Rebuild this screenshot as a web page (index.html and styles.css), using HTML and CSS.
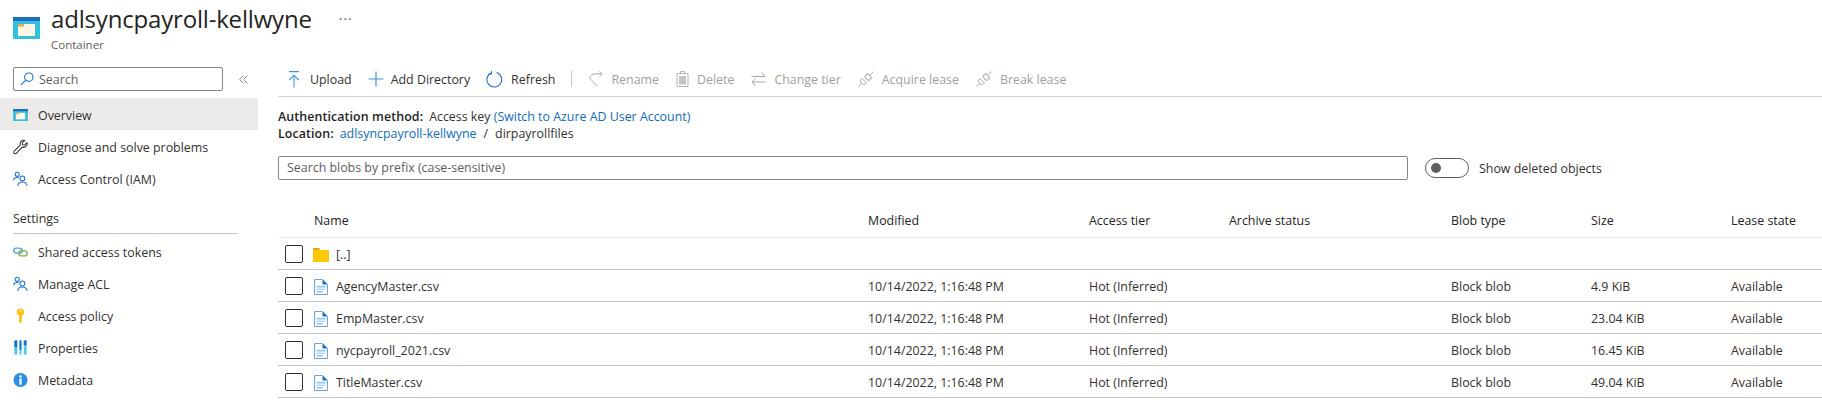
FILE: index.html
```html
<!DOCTYPE html>
<html>
<head>
<meta charset="utf-8">
<title>adlsyncpayroll-kellwyne</title>
<link rel="stylesheet" href="styles.css">
</head>
<body>
<svg class="defs" width="0" height="0">
  <defs>
    <symbol id="container" viewBox="0 0 27 22">
      <rect width="27" height="22" rx="1" fill="#32bedd"/>
      <rect width="27" height="4" fill="#1c6fc0"/>
      <rect x="5" y="7" width="17" height="12" fill="#fff6e6"/>
      <rect x="5" y="7" width="6" height="2.5" fill="#f2a64a"/>
    </symbol>
    <symbol id="people" viewBox="0 0 16 16">
      <g fill="none" stroke="#1a73d1" stroke-width="1.1">
        <circle cx="4.5" cy="3" r="2.2"/>
        <path d="M.6 9.5c.3-2 1.8-3 3.9-3 .7 0 1.3.1 1.8.3"/>
        <circle cx="10" cy="7.5" r="2.6"/>
        <path d="M5 15.5c.2-2.7 2.200-4.400 5-4.400s4.800 1.700 5 4.400"/>
      </g>
    </symbol>
    <symbol id="doc" viewBox="0 0 14 16">
      <path d="M.5.5h8l5 5v10H.5z" fill="#fff" stroke="#5ea9e6"/>
      <path d="M8.500.5l5 5h-5z" fill="#1a73c8"/>
      <rect x="2.500" y="7" width="9" height="1.500" fill="#8fc1ec"/>
      <rect x="2.500" y="9.500" width="9" height="1.500" fill="#b5d6f2"/>
      <rect x="2.500" y="12" width="6" height="1.500" fill="#8fc1ec"/>
    </symbol>
    <symbol id="plug" viewBox="0 0 16 16">
      <g fill="none" stroke="#a8a8a8" stroke-width="1">
        <path d="M.5 15.500l3.200-3.200"/>
        <path d="M12.500 3.500l3-3"/>
        <path d="M3 8.500c-.8 1.200-.6 2.800.5 3.900s2.700 1.300 3.900.5l1-1-4.400-4.400z"/>
        <rect x="7.200" y="3.800" width="6" height="4.600" rx="1.500" transform="rotate(45 10.200 6.100)"/>
      </g>
    </symbol>
  </defs>
</svg>

<div class="page-head">
  <svg class="head-icon"><use href="#container"/></svg>
  <div class="head-text">
    <h1>adlsyncpayroll-kellwyne</h1>
    <div class="sub">Container</div>
  </div>
  <div class="more">···</div>
</div>

<div class="layout">
  <div class="sidebar">
    <div class="side-search-row">
      <div class="side-search">
        <svg width="14" height="14" viewBox="0 0 14 14" fill="none" stroke="#1a73d1" stroke-width="1.1"><circle cx="8.800" cy="5.200" r="4.200"/><path d="M5.800 8.200L.8 13.200"/></svg>
        <span>Search</span>
      </div>
      <svg class="collapse" width="9" height="9" viewBox="0 0 9 9" fill="none" stroke="#8a8886"><path d="M4.300.5L.7 4.500l3.600 4M8.300.5L4.700 4.500l3.600 4"/></svg>
    </div>

    <div class="nav-item active">
      <svg class="nav-icon" viewBox="0 0 15 12"><use href="#container"/></svg>
      Overview
    </div>
    <div class="nav-item">
      <svg class="nav-icon" viewBox="0 0 16 16" fill="none" stroke="#323130" stroke-width="1.1"><path d="M1.200 12.500L7.800 6c-.6-2.200.1-4 2-5 1-.4 2-.4 2.800 0L9.900 3.600l.3 2 2 .3 2.700-2.600c.4 1 .3 2-.2 2.900-1 1.800-2.800 2.500-4.800 2L3.500 14.800c-.7.6-1.500.6-2.100 0-.6-.6-.8-1.600-.2-2.300z"/></svg>
      Diagnose and solve problems
    </div>
    <div class="nav-item">
      <svg class="nav-icon"><use href="#people"/></svg>
      Access Control (IAM)
    </div>

    <div class="nav-title">Settings</div>

    <div class="nav-item">
      <svg class="nav-icon" viewBox="0 0 16 16" fill="none" stroke-width="1.400"><rect x=".8" y="3.800" width="9" height="5.400" rx="2.700" stroke="#4a9fe0"/><rect x="6.200" y="6.800" width="9" height="5.400" rx="2.700" stroke="#7ab648"/></svg>
      Shared access tokens
    </div>
    <div class="nav-item">
      <svg class="nav-icon"><use href="#people"/></svg>
      Manage ACL
    </div>
    <div class="nav-item">
      <svg class="nav-icon" viewBox="0 0 16 16"><path d="M8 0c2.400 0 4.200 1.700 4.200 3.800 0 1.700-1.100 3-2.700 3.500V14L8 16l-1.500-1.800V7.300C4.900 6.800 3.800 5.500 3.800 3.800 3.800 1.700 5.600 0 8 0z" fill="#fcc419"/><circle cx="8" cy="2.600" r="1" fill="#fff3c4"/></svg>
      Access policy
    </div>
    <div class="nav-item">
      <svg class="nav-icon" viewBox="0 0 16 16"><rect x="1.500" width="3" height="15" fill="#50c8ea"/><rect x="1.500" width="3" height="7" fill="#1a73c8"/><rect x="7" width="2" height="15" fill="#50c8ea"/><rect x="7" width="2" height="10" fill="#1a73c8"/><rect x="11.500" width="3" height="15" fill="#50c8ea"/><rect x="11.500" width="3" height="5" fill="#1a73c8"/></svg>
      Properties
    </div>
    <div class="nav-item">
      <svg class="nav-icon" viewBox="0 0 16 16"><circle cx="8" cy="8" r="7.500" fill="#2a8fe0"/><circle cx="8" cy="4.300" r="1.300" fill="#fff"/><rect x="6.800" y="6.500" width="2.400" height="6.500" fill="#fff"/></svg>
      Metadata
    </div>
  </div>

  <div class="main">
    <div class="toolbar">
      <div class="tool upload">
        <svg width="12" height="17" viewBox="0 0 12 17" fill="none" stroke="#3b97e0" stroke-width="1.100"><path d="M1 .6h10M6 16.500V4.500M1.200 9L6 4.200 10.800 9"/></svg>
        Upload
      </div>
      <div class="tool add">
        <svg width="16" height="16" viewBox="0 0 16 16" fill="none" stroke="#3b97e0" stroke-width="1.200"><path d="M8 .5v15M.5 8h15"/></svg>
        Add Directory
      </div>
      <div class="tool">
        <svg width="17" height="17" viewBox="0 0 17 17" fill="none" stroke="#1a73c8" stroke-width="1.100"><path d="M10.500 1.600a7.400 7.400 0 1 1-5.300.3"/><path d="M5.500 0v3H2.500" stroke-width="1"/></svg>
        Refresh
      </div>
      <div class="tool-sep"></div>
      <div class="tool off">
        <svg width="14" height="16" viewBox="0 0 14 16" fill="none" stroke="#a8a8a8"><path d="M12.500 2.800H6.500C3 2.800.8 5 .8 7.400l8 8"/><path d="M10.500.3l2.500 2.500-2.500 2.500"/></svg>
        Rename
      </div>
      <div class="tool off">
        <svg width="13" height="16" viewBox="0 0 13 16"><path d="M1 2.500h11v13H1z" fill="none" stroke="#b5b5b5"/><path d="M4.500 2.500V.5h4v2" fill="none" stroke="#b5b5b5"/><rect x="3" y="5" width="7" height="8.500" fill="#c4c4c4"/></svg>
        Delete
      </div>
      <div class="tool off">
        <svg width="15" height="16" viewBox="0 0 15 16" fill="none" stroke="#a8a8a8"><path d="M.5 5.500h13.500M10.500 1.500l3.500 4M14.500 11H1M4.500 7.500L1 11l3.500 3.500"/></svg>
        Change tier
      </div>
      <div class="tool off">
        <svg width="16" height="16"><use href="#plug"/></svg>
        Acquire lease
      </div>
      <div class="tool off">
        <svg width="16" height="16"><use href="#plug"/></svg>
        Break lease
      </div>
    </div>

    <div class="info">
      <div><b>Authentication method:</b><span class="gap"></span>Access key <a>(Switch to Azure AD User Account)</a></div>
      <div><b>Location:</b><span class="gap"></span><a>adlsyncpayroll-kellwyne</a><span class="slash">/</span>dirpayrollfiles</div>
    </div>

    <div class="filter-row">
      <div class="filter">Search blobs by prefix (case-sensitive)</div>
      <div class="toggle"><div class="knob"></div></div>
      <div class="toggle-label">Show deleted objects</div>
    </div>

    <div class="row head">
      <div></div><div>Name</div><div>Modified</div><div>Access tier</div><div>Archive status</div><div>Blob type</div><div>Size</div><div>Lease state</div>
    </div>
    <div class="row">
      <div class="check"></div>
      <div class="name">
        <svg class="folder" width="16" height="14" viewBox="0 0 16 14"><path d="M0 1c0-.6.4-1 1-1h5l1.500 2H16v12H0z" fill="#ffc800"/><path d="M0 1c0-.6.4-1 1-1h5l1.500 2H0z" fill="#e0aa20"/></svg>
        [..]
      </div>
      <div></div><div></div><div></div><div></div><div></div><div></div>
    </div>
    <div class="row">
      <div class="check"></div>
      <div class="name"><svg class="doc"><use href="#doc"/></svg>AgencyMaster.csv</div>
      <div>10/14/2022, 1:16:48 PM</div><div>Hot (Inferred)</div><div></div><div>Block blob</div><div>4.9 KiB</div><div>Available</div>
    </div>
    <div class="row">
      <div class="check"></div>
      <div class="name"><svg class="doc"><use href="#doc"/></svg>EmpMaster.csv</div>
      <div>10/14/2022, 1:16:48 PM</div><div>Hot (Inferred)</div><div></div><div>Block blob</div><div>23.04 KiB</div><div>Available</div>
    </div>
    <div class="row">
      <div class="check"></div>
      <div class="name"><svg class="doc"><use href="#doc"/></svg>nycpayroll_2021.csv</div>
      <div>10/14/2022, 1:16:48 PM</div><div>Hot (Inferred)</div><div></div><div>Block blob</div><div>16.45 KiB</div><div>Available</div>
    </div>
    <div class="row">
      <div class="check"></div>
      <div class="name"><svg class="doc"><use href="#doc"/></svg>TitleMaster.csv</div>
      <div>10/14/2022, 1:16:48 PM</div><div>Hot (Inferred)</div><div></div><div>Block blob</div><div>49.04 KiB</div><div>Available</div>
    </div>
  </div>
</div>
</body>
</html>
```

FILE: styles.css
```css
html, body {
  margin: 0;
  height: 416px;
  overflow: hidden;
  background: #ffffff;
}

body {
  font-family: "Open Sans", "Noto Sans", sans-serif;
  font-size: 12.4px;
  color: #323130;
}

.defs {
  display: block;
  height: 0;
}

.page-head {
  display: flex;
  height: 60px;
  padding-left: 13px;
}

.head-icon {
  width: 27px;
  height: 22px;
  margin-top: 17px;
  margin-right: 11px;
}

.head-text h1 {
  margin: 0;
  font-size: 24px;
  font-weight: 400;
  letter-spacing: -0.18px;
  line-height: 38px;
  color: #252423;
}

.head-text .sub {
  font-size: 11.5px;
  line-height: 13px;
  color: #605e5c;
}

.more {
  margin-left: 27px;
  margin-top: 9px;
  font-size: 14px;
  letter-spacing: 1px;
  color: #605e5c;
}

.layout {
  display: flex;
}

.sidebar {
  width: 258px;
  flex: none;
}

.side-search-row {
  display: flex;
  align-items: center;
  height: 38px;
  padding-left: 13px;
}

.side-search {
  display: flex;
  align-items: center;
  gap: 5px;
  box-sizing: border-box;
  width: 210px;
  height: 24px;
  padding-left: 6px;
  border: 1px solid #8a8886;
  border-radius: 2px;
  color: #605e5c;
}

.collapse {
  margin-left: 16px;
}

.nav-item {
  display: flex;
  align-items: center;
  box-sizing: border-box;
  height: 32px;
  padding-left: 13px;
  padding-top: 2px;
}

.nav-item.active {
  background: #edebe9;
}

.nav-icon {
  width: 15px;
  height: 16px;
  margin-right: 10px;
  flex: none;
}

.nav-title {
  margin: 10px 20px 1px 13px;
  height: 30px;
  box-sizing: border-box;
  padding-top: 7px;
  border-bottom: 1px solid #c8c6c4;
  font-weight: 500;
  line-height: 16px;
}

.main {
  flex: 1;
  margin-left: 20px;
  min-width: 0;
}

.toolbar {
  display: flex;
  align-items: center;
  height: 34px;
  padding-left: 10px;
  padding-top: 2px;
  border-bottom: 1px solid #d2d0ce;
}

.tool {
  display: flex;
  align-items: center;
  gap: 8px;
  margin-right: 16px;
}

.tool.upload {
  gap: 10px;
}

.tool.add {
  gap: 7px;
}

.tool.off {
  margin-right: 17px;
  color: #a19f9d;
}

.tool-sep {
  width: 1px;
  height: 16px;
  margin-right: 17px;
  background: #c8c6c4;
}

.info {
  padding-top: 11px;
  line-height: 17px;
}

.info b {
  font-weight: 600;
  letter-spacing: 0.1px;
  color: #252423;
}

.info a {
  color: #0f6cbd;
}

.gap {
  display: inline-block;
  width: 6px;
}

.slash {
  margin: 0 7px;
}

.filter-row {
  display: flex;
  align-items: center;
  margin-top: 14px;
}

.filter {
  box-sizing: border-box;
  width: 1130px;
  height: 24px;
  padding-left: 8px;
  border: 1px solid #8a8886;
  border-radius: 2px;
  line-height: 21px;
  color: #605e5c;
}

.toggle {
  box-sizing: border-box;
  width: 44px;
  height: 20px;
  margin-left: 17px;
  margin-right: 10px;
  padding: 4px 5px;
  border: 1px solid #605e5c;
  border-radius: 10px;
}

.knob {
  width: 10px;
  height: 10px;
  border-radius: 50%;
  background: #605e5c;
}

.row {
  display: grid;
  grid-template-columns: 36px 554px 221px 140px 222px 140px 140px 90px;
  align-items: center;
  box-sizing: border-box;
  height: 32px;
  padding-top: 2px;
  border-bottom: 1px solid #c8c6c4;
  white-space: nowrap;
}

.row.head {
  height: 42px;
  margin-top: 16px;
  padding-top: 8px;
  border-bottom-color: #edebe9;
  font-weight: 500;
  color: #252423;
}

.check {
  box-sizing: border-box;
  width: 18px;
  height: 18px;
  margin-left: 7px;
  margin-top: -2px;
  border: 1px solid #323130;
  border-radius: 2px;
}

.name {
  display: flex;
  align-items: center;
}

.doc {
  width: 14px;
  height: 16px;
  margin-right: 8px;
}

.folder {
  margin-left: -1px;
  margin-right: 7px;
}
```
